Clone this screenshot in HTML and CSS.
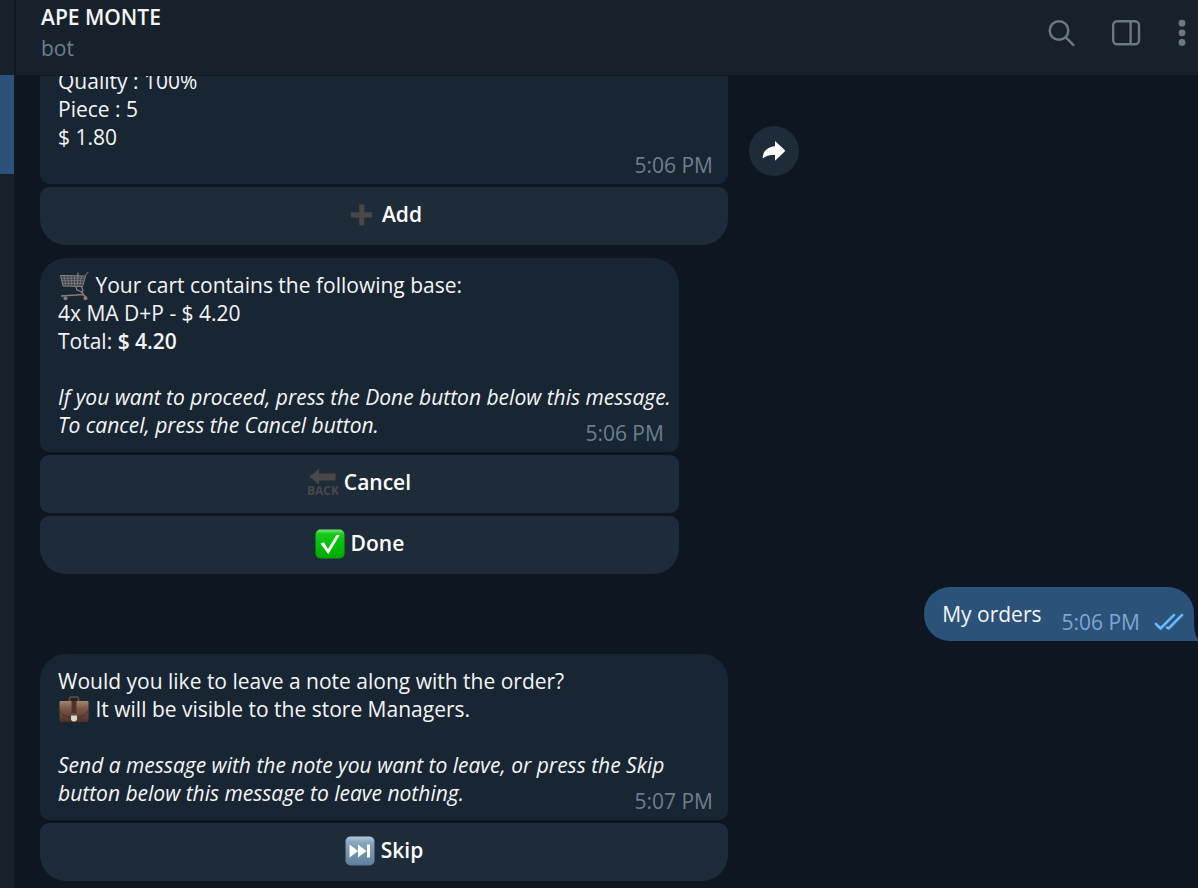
FILE: index.html
```html
<!DOCTYPE html>
<html lang="en">
<head>
<meta charset="utf-8">
<title>APE MONTE</title>
<link rel="stylesheet" href="styles.css">
</head>
<body>
<div class="app">
  <aside class="rail"><div class="rail-selected"></div></aside>
  <div class="panel">
    <header class="header">
      <div class="peer">
        <h1 class="peer-name">APE MONTE</h1>
        <p class="peer-status">bot</p>
      </div>
      <div class="tools">
        <button class="tool" aria-label="Search"><svg width="28" height="28" viewBox="0 0 28 28" fill="none" stroke="currentColor" stroke-width="2.5" stroke-linecap="round"><circle cx="11" cy="11.500" r="9.300"/><path d="M17.800 18.300 25.300 25.800"/></svg></button>
        <button class="tool" aria-label="Toggle side panel"><svg width="30" height="28" viewBox="1 0 30 28" fill="none" stroke="currentColor" stroke-width="2.400"><rect x="2.200" y="2.200" width="25.800" height="23" rx="4"/><path d="M19.600 2.500V25" stroke-width="2.400"/></svg></button>
        <button class="tool" aria-label="More"><svg width="8" height="28" viewBox="0 0 8 28" fill="currentColor"><circle cx="4" cy="4.200" r="3.400"/><circle cx="4" cy="13.800" r="3.400"/><circle cx="4" cy="23.400" r="3.400"/></svg></button>
      </div>
    </header>
    <main class="chat">
      <section class="group group-wide">
        <div class="row">
          <div class="bubble bubble-product">
            Quality : 100%<br>Piece : 5<br>$ 1.80
            <time class="time">5:06 PM</time>
          </div>
          <button class="forward" aria-label="Forward"><svg width="24" height="20" viewBox="0 0 24 20"><path fill="#fff" d="M13 .6Q13 0 13.600.4L22.700 9Q23.400 9.700 22.700 10.400L13.600 19.300Q13 19.700 13 19V14C8 13.600 4.500 14.200 1.400 17Q.600 17.400.700 16.300C1.200 9.600 6.200 5.800 13 5.200Z"/></svg></button>
        </div>
        <button class="key"><svg class="emoji" viewBox="-4 -3 30 30"><path fill="#484848" d="M9.200 1.500h5.100v7.800h7.700v5.100h-7.700v7.900H9.200v-7.900H1V9.300h8.200z"/></svg>Add</button>
      </section>

      <section class="group">
        <div class="bubble bubble-cart">
          <svg class="emoji emoji-inline" viewBox="0 0 30 30"><path d="M1.500 4.500 26.500 5 23.500 15.500 4 15z" fill="#5c5f62" fill-opacity=".45"/><g fill="none" stroke="#8b8886" stroke-width="1"><path d="M29.300 1 27 3.500 23.500 15.500 4 15 1.500 4.500 25.500 5"/><path d="M2.200 7.200h23.500M2.800 9.800h22M3.500 12.400h20.700M5 4.800l2 10M8.500 4.800l1.300 10M12 4.800l.8 10M15.500 5v10M19 5l-.8 10M22.500 5l-1.700 10" stroke-width=".7"/><path d="M19 1.500v4M17 16l1 3 5 2 3 5M22.500 15.500l1.500 4-2 2.500" stroke-width="1.200"/></g><path d="M2 25 24 23.500 27 26" fill="none" stroke="#8c7b76" stroke-width="1.400"/><circle cx="6.500" cy="27.300" r="2" fill="#8e7772"/><circle cx="26.500" cy="27.300" r="2" fill="#8e7772"/></svg> Your cart contains the following base:<br>4x MA D+P - $ 4.20<br>Total: <strong>$ 4.20</strong><br><br><em>If you want to proceed, press the Done button below this message.<br>To cancel, press the Cancel button.</em>
          <time class="time">5:06 PM</time>
        </div>
        <button class="key key-mid"><svg class="emoji" viewBox="0 0 30 30"><path fill="#484848" d="M1.500 8.800 11 1v4.500h16.500v7H11v4.300z"/><text class="back-label" x="15" y="27" text-anchor="middle">BACK</text></svg>Cancel</button>
        <button class="key"><svg class="emoji" viewBox="0 0 30 30"><defs><linearGradient id="green" x2="0" y2="1"><stop stop-color="#78e878"/><stop offset=".16" stop-color="#17c91c"/><stop offset=".6" stop-color="#00bd05"/><stop offset="1" stop-color="#00a509"/></linearGradient></defs><rect x=".500" y=".500" width="29" height="29" rx="5" fill="url(#green)"/><path fill="#fff" d="M5.500 14.500 9 13.200 13 20 21.300 6.200 24.800 5.800 13.300 25.200z"/></svg>Done</button>
      </section>

      <div class="bubble bubble-out">
        <span>My orders</span>
        <span class="receipt"><time>5:06 PM</time><svg width="30" height="18" viewBox="0 0 30 18" fill="none" stroke="#6ab8fa" stroke-width="2.600" stroke-linecap="round" stroke-linejoin="round"><path d="M2 11 6.500 15.500 20 2M13 14.500 14.500 15.500 28 2"/></svg></span>
        <svg class="tail" width="14" height="22" viewBox="0 0 14 22"><path fill="#2b5278" d="M0 0H9C9 10 10 17 14 22H0z"/></svg>
      </div>

      <section class="group">
        <div class="bubble">
          Would you like to leave a note along with the order?<br><svg class="emoji emoji-inline" viewBox="0 0 30 30"><defs><linearGradient id="leather" x2="0" y2="1"><stop stop-color="#a98370"/><stop offset=".35" stop-color="#7d5949"/><stop offset="1" stop-color="#4b3028"/></linearGradient></defs><path d="M10.500 6V3.500Q10.500 2 12 2h6Q19.500 2 19.500 3.500V6" fill="none" stroke="#704b3c" stroke-width="1.600"/><rect x=".500" y="6" width="29" height="21" rx="1.200" fill="url(#leather)"/><path d="M1 16Q4 21.500 11 22h8Q26 21.500 29 16" fill="none" stroke="#4c3027" stroke-width="1"/><path fill="#503329" d="M12.500 6h5v12h-5z"/><path fill="#d8d5d2" d="M12 20.500h6V25l-2 1.500h-2L12 25z"/></svg> It will be visible to the store Managers.<br><br><em>Send a message with the note you want to leave, or press the Skip<br>button below this message to leave nothing.</em>
          <time class="time">5:07 PM</time>
        </div>
        <button class="key"><svg class="emoji" viewBox="0 0 30 30"><defs><linearGradient id="steel" x2="0" y2="1"><stop stop-color="#b4c8da"/><stop offset=".2" stop-color="#88a4be"/><stop offset="1" stop-color="#5f7f9d"/></linearGradient></defs><rect x=".500" y=".500" width="29" height="29" rx="5" fill="url(#steel)"/><path fill="#fff" d="M4.500 8.500 13 15l-8.500 6.500zM13 8.500 21.500 15 13 21.500zM22 8.500h3v13h-3z"/></svg>Skip</button>
      </section>
    </main>
  </div>
</div>
</body>
</html>
```
FILE: styles.css
```css
* { box-sizing: border-box; }

body {
  margin: 0;
  background: #0e1621;
  color: #f5f5f5;
  font: 21px/28px "Open Sans", "Noto Sans", sans-serif;
}

button {
  border: 0;
  padding: 0;
  background: none;
  color: inherit;
  font: inherit;
  cursor: pointer;
}

.app { display: flex; height: 100vh; overflow: hidden; }

.rail {
  flex: none;
  width: 16px;
  padding-top: 75px;
  background: #17212b;
  border-right: 2px solid #101923;
}
.rail-selected { height: 99px; background: #2b5278; }

.panel { flex: 1; min-width: 0; display: flex; flex-direction: column; }

.header {
  flex: none;
  display: flex;
  justify-content: space-between;
  height: 76px;
  padding: 3px 12px 0 25px;
  background: #17212b;
  border-bottom: 1px solid #101923;
}
.peer-name { margin: 0; font-size: 21px; line-height: 28px; font-weight: 600; }
.peer-status { margin: 3px 0 0; color: #6d7f8f; }

.tools { display: flex; align-items: flex-start; gap: 36px; padding-top: 16px; color: #6c7883; }
.tool { display: flex; }

.chat {
  flex: 1;
  min-height: 0;
  display: flex;
  flex-direction: column;
  justify-content: flex-end;
  align-items: flex-start;
  gap: 13px;
  padding: 0 4px 7px 24px;
  overflow: hidden;
}

.group { flex: none; display: flex; flex-direction: column; gap: 3px; max-width: 688px; }
.group:last-child, .group-wide { width: 100%; }

.row { display: flex; align-items: flex-end; position: relative; }

.bubble {
  position: relative;
  padding: 13px 18px;
  border-radius: 26px 26px 9px 9px;
  background: #182533;
}
.bubble-product { flex: 1; padding-bottom: 33px; }
.bubble-cart { padding-right: 8px; }

.time { position: absolute; right: 15px; bottom: 5px; color: #6d7f8f; }

strong { font-weight: 600; }

.forward {
  position: absolute;
  left: calc(100% + 21px);
  bottom: 8px;
  display: flex;
  align-items: center;
  justify-content: center;
  width: 50px;
  height: 50px;
  border-radius: 50%;
  background: #1e2c3a;
}

.key {
  display: flex;
  align-items: center;
  justify-content: center;
  gap: 6px;
  height: 58px;
  padding-bottom: 4px;
  border-radius: 9px 9px 26px 26px;
  background: #1e2c3a;
  color: #fff;
  font-weight: 600;
}
.key-mid { border-radius: 9px; }

.emoji { width: 30px; height: 30px; }
.key .emoji { margin-top: 2px; }
.emoji-inline { margin: -8px 1px; vertical-align: 0; }
.back-label { fill: #484848; font: bold 12px "Liberation Sans Narrow", "Open Sans", sans-serif; }

.bubble-out {
  flex: none;
  align-self: flex-end;
  display: flex;
  gap: 20px;
  padding-right: 10px;
  border-radius: 26px 26px 0 26px;
  background: #2b5278;
}
.receipt {
  display: flex;
  align-items: center;
  gap: 14px;
  margin: 8px 0 -8px;
  color: #7da8d3;
}
.tail { position: absolute; right: -5px; bottom: 0; }
```
